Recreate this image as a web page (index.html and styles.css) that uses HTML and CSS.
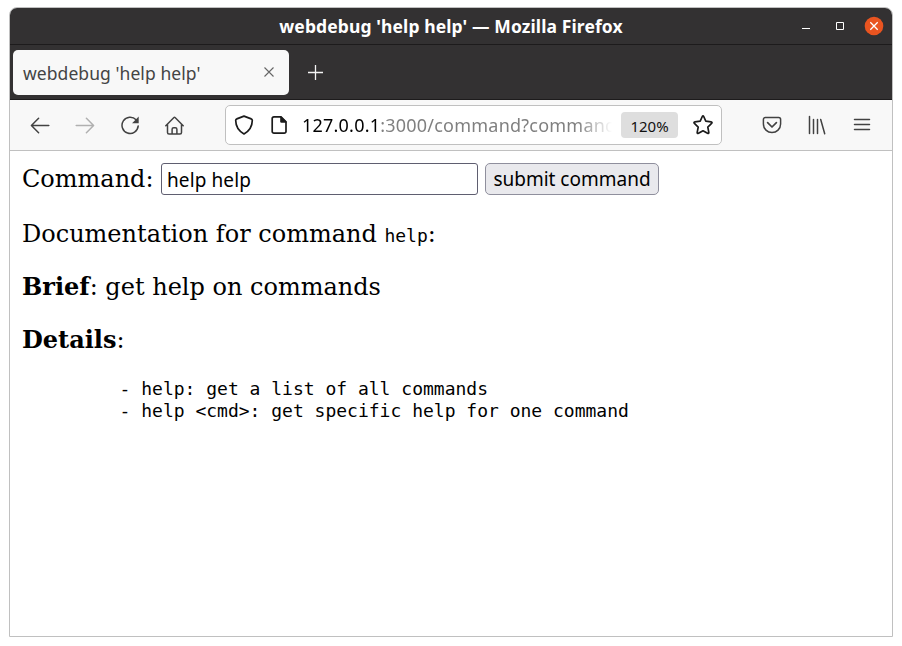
FILE: index.html
```html
<!DOCTYPE html>
<html lang="en">
<head>
<meta charset="utf-8">
<title>webdebug 'help help'</title>
<link rel="stylesheet" href="styles.css">
</head>
<body>
<div class="window">
  <header class="titlebar">
    <span class="title">webdebug 'help help' — Mozilla Firefox</span>
    <div class="controls">
      <svg width="12" height="12" viewBox="0 0 12 12"><path d="M2 8.5h8" stroke="#fff"/></svg>
      <svg width="12" height="12" viewBox="0 0 12 12"><path d="M2.500 2.500h7v7h-7z" stroke="#fff" fill="none"/></svg>
      <svg width="20" height="20" viewBox="0 0 20 20"><circle cx="10" cy="10" r="9.3" fill="#e95420"/><path d="M6.300 6.300l7.400 7.400M13.700 6.300l-7.400 7.400" stroke="#fff" stroke-width="1.3"/></svg>
    </div>
  </header>
  <div class="tabs">
    <div class="tab">
      <span class="tab-label">webdebug 'help help'</span>
      <svg width="12" height="12" viewBox="0 0 12 12"><path d="M1.500 1.500l9 9M10.500 1.500l-9 9" stroke="#666" stroke-width="1.1"/></svg>
    </div>
    <svg class="plus" width="16" height="16" viewBox="0 0 16 16"><path d="M8.500 1v15M1 8.500h15" stroke="#f4f4f4" stroke-width="1.300"/></svg>
  </div>
  <nav class="toolbar">
    <div class="nav-buttons">
      <svg class="icon" viewBox="0 0 20 20"><path d="M18.800 10.500H1.600M8.600 3.300L1.400 10.500l7.200 7.200"/></svg>
      <svg class="icon faded" viewBox="0 0 20 20"><path d="M1.200 10.500h17.200M11.400 3.300l7.200 7.200-7.200 7.200"/></svg>
      <svg class="icon" viewBox="0 0 20 20"><path d="M16.100 4.800a8.100 8.100 0 1 0 2.100 6.100"/><path class="solid" d="M18.700 1.600v6.600h-6.600z"/></svg>
      <svg class="icon" viewBox="0 0 20 20"><path d="M.8 10.700l7.900-8a1.200 1.200 0 0 1 1.600 0l7.900 8M2.500 9.300v8.300a1.500 1.500 0 0 0 1.500 1.500h11a1.500 1.500 0 0 0 1.500-1.500V9.300M7.100 18.900v-4.600a1.600 1.600 0 0 1 1.600-1.600h1.600a1.600 1.600 0 0 1 1.600 1.600v4.600"/></svg>
    </div>
    <div class="urlbar">
      <svg class="icon dark" viewBox="0 0 20 20"><path d="M10 1.100l7.200 2.800q1.100.4 1.100 1.600C18.200 11.800 15 16.200 10 18.900 5 16.200 1.800 11.800 1.700 5.500q0-1.200 1.100-1.600z"/></svg>
      <svg class="icon dark page-icon" viewBox="0 0 20 20"><path d="M5 1.800h7l5 5v9.600a1.800 1.800 0 0 1-1.800 1.800H5a1.800 1.800 0 0 1-1.800-1.800V3.600A1.800 1.800 0 0 1 5 1.800z"/><path class="solid" d="M11.200 1.500h1.100l5 5v1.300h-4.800a1.300 1.300 0 0 1-1.300-1.300z"/></svg>
      <span class="url"><span class="host">127.0.0.1</span>:3000/command?command</span>
      <span class="zoom">120%</span>
      <svg class="icon dark star" viewBox="0 0 20 20"><path d="M9.300 1.500q.7-1.100 1.400 0l2.100 4.600 5.200.7q1.600.4.600 1.600l-3.800 3.700 1 5.300q.1 1.500-1.300.9L10 15.800l-4.500 2.500q-1.400.6-1.300-.9l1-5.300L1.400 8.400q-1-1.200.6-1.600l5.200-.7z"/></svg>
    </div>
    <div class="tools">
      <svg class="icon" viewBox="0 0 20 20"><path d="M3.400 2.500h13.200a2 2 0 0 1 2 2V9c0 5-4 8.500-8.600 8.500S1.400 14 1.400 9V4.500a2 2 0 0 1 2-2z"/><path d="M5.600 7.700l4.400 4.300 4.400-4.300" stroke-width="1.700"/></svg>
      <svg class="icon" viewBox="0 0 20 20"><path d="M2.500 1.500v17M6.500 4.500v14M10.500 4.500v14M13.700 4.500l4 14.300"/></svg>
      <svg class="icon" viewBox="0 0 20 20"><path d="M2.500 4.500h15M2.500 9.500h15M2.500 14.500h15"/></svg>
    </div>
  </nav>
  <main class="page">
    <form class="command-form">
      <label for="command">Command:</label>
      <input id="command" type="text" value="help help">
      <button type="button">submit command</button>
    </form>
    <p>Documentation for command <code>help</code>:</p>
    <p><b>Brief</b>: get help on commands</p>
    <p><b>Details</b>:</p>
    <pre>         - help: get a list of all commands
         - help &lt;cmd&gt;: get specific help for one command</pre>
  </main>
</div>
</body>
</html>
```
FILE: styles.css
```css
* { box-sizing: border-box; }
body { margin: 0; padding: 7px 9px; background: #fff; font-family: "Noto Sans", sans-serif; }
svg { display: block; flex: none; }
.window { width: 884px; height: 630px; border: 1px solid #c0c0c0; border-radius: 8px 8px 0 0; overflow: hidden; display: flex; flex-direction: column; background: #fff; }
.titlebar { height: 37px; flex: none; background: #333132; border-bottom: 1px solid #1d1b1c; display: grid; grid-template-columns: 1fr auto 1fr; align-items: center; color: #fff; }
.title { grid-column: 2; font-size: 17.5px; font-weight: 700; line-height: 36px; white-space: nowrap; letter-spacing: 0.11px; }
.controls { display: flex; align-items: center; justify-content: flex-end; gap: 22px; padding-right: 8px; }
.controls svg:last-child { margin-left: -4px; }
.tabs { height: 55px; flex: none; background: #333132; border-bottom: 1px solid #1d1b1c; display: flex; align-items: center; padding: 0 3px 0 3px; }
.tab { width: 276px; height: 45px; border-radius: 5px; background: #f8f8f8; color: #444; display: flex; align-items: center; justify-content: space-between; padding: 0 14px 0 10px; }
.tab-label { font-size: 17.5px; letter-spacing: 0.07px; white-space: nowrap; padding-top: 2px; }
.plus { margin-left: 18px; }
.toolbar { height: 51px; flex: none; background: #f8f8f8; border-bottom: 1px solid #c0c0c0; display: flex; align-items: center; }
.icon { width: 20px; height: 20px; fill: none; stroke: #424242; stroke-width: 1.5; stroke-linecap: round; stroke-linejoin: round; }
.icon .solid { fill: #424242; stroke: none; }
.faded { stroke: #b0b0b0; }
.dark { stroke: #1b1b1b; stroke-width: 1.7; }
.dark .solid { fill: #1b1b1b; }
.nav-buttons { display: flex; gap: 25px; width: 215px; padding-left: 20px; flex: none; }
.urlbar { width: 497px; height: 40px; flex: none; background: #fff; border: 1px solid #c0c0c0; border-radius: 5px; display: flex; align-items: center; padding: 0 8px; }
.page-icon { margin-left: 15px; }
.url { width: 310px; margin-left: 13px; font-size: 18px; letter-spacing: 0.22px; line-height: 32px; color: #808080; white-space: nowrap; overflow: hidden; -webkit-mask-image: linear-gradient(to right, #000 89%, transparent); mask-image: linear-gradient(to right, #000 89%, transparent); }
.host { color: #000; }
.zoom { width: 57px; height: 26px; margin-left: 9px; border-radius: 4px; background: #dedede; color: #111; font-size: 15px; line-height: 28px; text-align: center; flex: none; }
.star { margin-left: 15px; }
.tools { display: flex; gap: 25px; margin-left: 40px; }
.page { flex: 1; padding: 12px; font-family: "DejaVu Serif", serif; font-size: 24px; line-height: 28px; color: #000; }
.command-form { display: flex; height: 32px; }
.command-form label { width: 139px; line-height: 33px; }
.command-form input { width: 317px; height: 32px; border: 1px solid #5f5e70; border-radius: 3px; padding: 1px 5px 0; font: 19px/29px "Noto Sans", sans-serif; letter-spacing: 0.1px; color: #000; }
.command-form button { width: 174px; height: 32px; margin-left: 7px; border: 1px solid #8f8f9d; border-radius: 5px; background: #e9e9ed; padding: 1px 0 0; font: 19px/29px "Noto Sans", sans-serif; color: #000; white-space: nowrap; }
.page p { margin: 25px 0 0; }
.page pre { margin: 24px 0 0; line-height: 22px; }
.page code, .page pre { font-family: "DejaVu Sans Mono", monospace; font-size: 18px; }
.page code { line-height: 1; }
```
